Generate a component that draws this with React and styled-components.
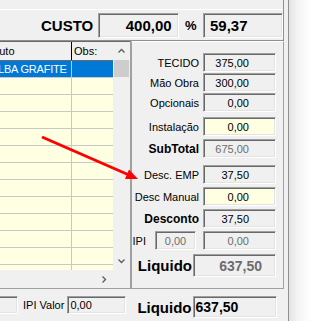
import React, { useLayoutEffect, useRef } from "react";
import styled, { createGlobalStyle } from "styled-components";

const GlobalStyle = createGlobalStyle`
  html, body { margin: 0; padding: 0; background: #fff; }
  body { font-family: "Liberation Sans", Arial, sans-serif; font-size: 11px; color: #000; }
`;

const Page = styled.div`
  position: relative;
  display: flex;
  width: 329px;
  height: 321px;
  overflow: hidden;
  background: #fff;
`;

const Window = styled.div`
  flex: none;
  width: 288px;
  height: 321px;
  display: flex;
  flex-direction: column;
  background: #f0f0f0;
  border-right: 1px solid #8f8f8f;
`;

const Shadow = styled.div`
  flex: 1;
  background: linear-gradient(to right, #e2e2e2 0px, #f3f3f3 8px, #fff 22px);
`;

const TopPanel = styled.div`
  width: 283px;
  height: 40px;
  border-right: 1px solid #8f8f8f;
  border-bottom: 1px solid #8f8f8f;
  overflow: hidden;
`;

const TopStub = styled.div`
  height: 9px;
  border-bottom: 1px solid #fff;
`;

const CustoRow = styled.div`
  display: flex;
  align-items: center;
  height: 25px;
  margin-top: 3px;
  padding-left: 41px;
`;

const CustoLabel = styled.span`
  width: 58px;
  font-size: 15px;
  font-weight: bold;
`;

const Percent = styled.span`
  width: 25px;
  text-align: center;
  font-size: 13px;
  font-weight: bold;
`;

const Edit = styled.div`
  box-sizing: border-box;
  flex: none;
  width: ${(p) => p.$w}px;
  height: ${(p) => p.$h || 19}px;
  margin-right: ${(p) => p.$mr || 0}px;
  display: flex;
  align-items: center;
  justify-content: ${(p) =>
    p.$align === "left" ? "flex-start" : p.$align === "center" ? "center" : "flex-end"};
  padding: 0 ${(p) => (p.$pr === undefined ? 26 : p.$pr)}px 0 ${(p) => (p.$pl === undefined ? 2 : p.$pl)}px;
  background: ${(p) => (p.$yellow ? "#ffffe1" : "#f0f0f0")};
  color: ${(p) => (p.$disabled ? "#6d6d6d" : "#000")};
  border: 1px solid;
  border-color: #a0a0a0 #fff #fff #a0a0a0;
  border-left-width: ${(p) => (p.$cut ? 0 : 1)}px;
  box-shadow: inset ${(p) => (p.$cut ? 0 : 1)}px 1px 0 #696969, inset -1px -1px 0 #e3e3e3;
  font-size: ${(p) => p.$fs || 11}px;
  font-weight: ${(p) => (p.$bold ? "bold" : "normal")};
  white-space: nowrap;
  overflow: hidden;
`;

const Middle = styled.div`
  display: flex;
  height: 248px;
`;

const GridWrap = styled.div`
  width: 130px;
  height: 246px;
  border-top: 1px solid #696969;
  border-right: 1px solid #a0a0a0;
  border-bottom: 1px solid #a0a0a0;
  display: flex;
  flex-direction: column;
`;

const GridMain = styled.div`
  display: flex;
  height: 228px;
`;

const Cells = styled.div`
  width: 113px;
  overflow: hidden;
  background: #ffffe1;
`;

const HeaderRow = styled.div`
  display: flex;
  width: max-content;
  height: 18px;
  border-bottom: 1px solid #696969;
  background: #f0f0f0;
`;

const HeadCell = styled.div`
  box-sizing: border-box;
  width: ${(p) => p.$w}px;
  padding-left: 2px;
  display: flex;
  align-items: center;
  border-right: ${(p) => (p.$sep ? "1px solid #000" : "none")};
  white-space: nowrap;
  overflow: hidden;
`;

const Row = styled.div`
  display: flex;
  width: max-content;
  height: 16px;
  border-bottom: 1px solid #c8c8c8;
  background: ${(p) => (p.$sel ? "#0078d7" : "#ffffe1")};
  color: ${(p) => (p.$sel ? "#fff" : "#000")};
`;

const Cell = styled.div`
  box-sizing: border-box;
  width: ${(p) => p.$w}px;
  padding-left: 2px;
  display: flex;
  align-items: center;
  border-right: ${(p) => (p.$sep ? "1px solid #c8c8c8" : "none")};
  white-space: nowrap;
  overflow: hidden;
  letter-spacing: -0.2px;
`;

const VScroll = styled.div`
  width: 17px;
  display: flex;
  flex-direction: column;
  background: #f0f0f0;
`;

const ArrowBtn = styled.div`
  flex: none;
  width: 17px;
  height: ${(p) => p.$h || 17}px;
  display: flex;
  align-items: center;
  justify-content: center;
`;

const Thumb = styled.div`
  flex: none;
  height: 17px;
  margin: 0 1px;
  background: #cdcdcd;
`;

const Track = styled.div`
  flex: 1;
`;

const HScrollRow = styled.div`
  display: flex;
  height: 18px;
`;

const HTrack = styled.div`
  width: 113px;
  display: flex;
  justify-content: flex-end;
  background: #f0f0f0;
`;

const Corner = styled.div`
  width: 17px;
  background: #f0f0f0;
`;

const RightPanel = styled.div`
  width: 151px;
  height: 235px;
  padding-top: 11px;
  border: 1px solid;
  border-color: #fff #a0a0a0 #a0a0a0 #a0a0a0;
  display: flex;
  flex-direction: column;
`;

const FieldRow = styled.div`
  display: flex;
  justify-content: flex-end;
  align-items: center;
  padding-right: 7px;
  margin-top: ${(p) => p.$mt || 0}px;
`;

const Label = styled.span`
  margin-right: ${(p) => (p.$mr === undefined ? 4 : p.$mr)}px;
  margin-left: ${(p) => p.$ml || 0}px;
  font-size: ${(p) => p.$fs || 11}px;
  font-weight: ${(p) => (p.$bold ? "bold" : "normal")};
  white-space: nowrap;
`;

const Bottom = styled.div`
  display: flex;
  align-items: flex-start;
  height: 25px;
  padding-top: 7px;
`;

const Pair = styled.div`
  display: flex;
  align-items: center;
`;

const Overlay = styled.svg`
  position: absolute;
  left: 0;
  top: 0;
  pointer-events: none;
`;

const Chevron = ({ dir }) => {
  const paths = {
    up: "M1.5 5.5 L4.5 2.5 L7.5 5.5",
    down: "M1.5 2.5 L4.5 5.5 L7.5 2.5",
    right: "M2.5 1.5 L5.5 4.5 L2.5 7.5",
  };
  return (
    <svg width="9" height="9" viewBox="0 0 9 9">
      <path d={paths[dir]} fill="none" stroke="#606060" strokeWidth="1.4" />
    </svg>
  );
};

const rows = [{ produto: "BL ALBA GRAFITE", obs: "", sel: true }];
for (let i = 0; i < 12; i++) rows.push({ produto: "", obs: "" });

const PRODUTO_W = 98;
const OBS_W = 41;

const Grid = () => {
  const ref = useRef(null);
  useLayoutEffect(() => {
    if (ref.current) ref.current.scrollLeft = 26;
  }, []);
  return (
    <GridWrap>
      <GridMain>
        <Cells ref={ref}>
          <HeaderRow>
            <HeadCell $w={PRODUTO_W} $sep>Produto</HeadCell>
            <HeadCell $w={OBS_W}>Obs:</HeadCell>
          </HeaderRow>
          {rows.map((r, i) => (
            <Row key={i} $sel={r.sel}>
              <Cell $w={PRODUTO_W} $sep>{r.produto}</Cell>
              <Cell $w={OBS_W}>{r.obs}</Cell>
            </Row>
          ))}
        </Cells>
        <VScroll>
          <ArrowBtn $h={18}>
            <Chevron dir="up" />
          </ArrowBtn>
          <Thumb />
          <Track />
          <ArrowBtn $h={18}>
            <Chevron dir="down" />
          </ArrowBtn>
        </VScroll>
      </GridMain>
      <HScrollRow>
        <HTrack>
          <ArrowBtn $h={18}>
            <Chevron dir="right" />
          </ArrowBtn>
        </HTrack>
        <Corner />
      </HScrollRow>
    </GridWrap>
  );
};

const Totals = () => (
  <RightPanel>
    <FieldRow>
      <Label>TECIDO</Label>
      <Edit $w={73}>375,00</Edit>
    </FieldRow>
    <FieldRow $mt={1}>
      <Label>Mão Obra</Label>
      <Edit $w={73}>300,00</Edit>
    </FieldRow>
    <FieldRow $mt={1}>
      <Label>Opcionais</Label>
      <Edit $w={73}>0,00</Edit>
    </FieldRow>
    <FieldRow $mt={5}>
      <Label>Instalação</Label>
      <Edit $w={73} $yellow>0,00</Edit>
    </FieldRow>
    <FieldRow $mt={3}>
      <Label $bold $fs={12}>SubTotal</Label>
      <Edit $w={73} $disabled>675,00</Edit>
    </FieldRow>
    <FieldRow $mt={7}>
      <Label>Desc. EMP</Label>
      <Edit $w={73}>37,50</Edit>
    </FieldRow>
    <FieldRow $mt={3}>
      <Label>Desc Manual</Label>
      <Edit $w={73} $yellow>0,00</Edit>
    </FieldRow>
    <FieldRow $mt={3}>
      <Label $bold $fs={12}>Desconto</Label>
      <Edit $w={73}>37,50</Edit>
    </FieldRow>
    <FieldRow $mt={3}>
      <Label $mr={9}>IPI</Label>
      <Edit $w={41} $mr={7} $align="center" $pr={0} $pl={0} $disabled>0,00</Edit>
      <Edit $w={73} $disabled>0,00</Edit>
    </FieldRow>
    <FieldRow $mt={4}>
      <Label $bold $fs={15} $mr={1}>Liquido</Label>
      <Edit $w={83} $h={23} $bold $fs={14} $pr={13} $disabled>637,50</Edit>
    </FieldRow>
  </RightPanel>
);

const App = () => (
  <Page>
    <GlobalStyle />
    <Window>
      <TopPanel>
        <TopStub />
        <CustoRow>
          <CustoLabel>CUSTO</CustoLabel>
          <Edit $w={81} $h={25} $bold $fs={15} $pr={6}>400,00</Edit>
          <Percent>%</Percent>
          <Edit $w={80} $h={25} $bold $fs={15} $align="left" $pl={6}>59,37</Edit>
        </CustoRow>
      </TopPanel>
      <Middle>
        <Grid />
        <Totals />
      </Middle>
      <Bottom>
        <Edit $w={18} $h={18} $pl={0} $pr={0} $cut />
        <Pair>
          <Label $ml={5} $mr={3}>IPI Valor</Label>
          <Edit $w={59} $h={18} $align="left" $pl={2} $pr={0}>0,00</Edit>
        </Pair>
        <Pair>
          <Label $bold $fs={15} $ml={11} $mr={1}>Liquido</Label>
          <Edit $w={84} $h={22} $bold $fs={14} $align="left" $pl={2} $pr={0}>637,50</Edit>
        </Pair>
      </Bottom>
    </Window>
    <Shadow />
    <Overlay width="329" height="321" viewBox="0 0 329 321">
      <line x1="42" y1="137" x2="129" y2="175" stroke="#ff0000" strokeWidth="3" />
      <polygon points="138,179 125,179 129,169.5" fill="#ff0000" />
    </Overlay>
  </Page>
);

export default App;
